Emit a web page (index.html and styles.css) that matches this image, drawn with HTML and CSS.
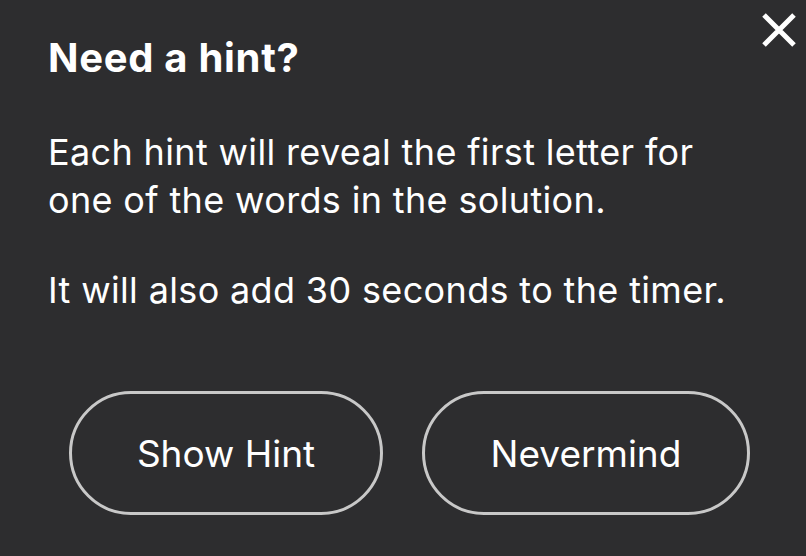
FILE: index.html
```html
<!DOCTYPE html>
<html>
<head>
<meta charset="utf-8">
<link rel="stylesheet" href="styles.css">
</head>
<body>
<div class="dialog">
  <button class="close" aria-label="Close">
    <svg width="36" height="36" viewBox="0 0 36 36"><path d="M3 3 L33 33 M33 3 L3 33" stroke="#fff" stroke-width="5" stroke-linecap="butt" fill="none"/></svg>
  </button>
  <h1 class="title">Need a hint?</h1>
  <p class="text">Each hint will reveal the first letter for one of the words in the solution.</p>
  <p class="text">It will also add 30 seconds to the timer.</p>
  <div class="actions">
    <button class="btn btn-show">Show Hint</button>
    <button class="btn btn-never">Nevermind</button>
  </div>
</div>
</body>
</html>
```
FILE: styles.css
```css
html, body {
  margin: 0;
  padding: 0;
  background: #2d2d2f;
}
.dialog {
  position: relative;
  width: 806px;
  height: 556px;
  box-sizing: border-box;
  padding: 36px 48px 0 48px;
  font-family: "Inter", "Liberation Sans", sans-serif;
  color: #fff;
}
.close {
  position: absolute;
  top: 12px;
  left: 761px;
  width: 36px;
  height: 36px;
  padding: 0;
  border: 0;
  background: none;
}
.close svg { display: block; }
.title {
  margin: 0;
  font-size: 40px;
  font-weight: 700;
  line-height: 44px;
  letter-spacing: 0.7px;
}
.text {
  margin: 48px 0 0 0;
  font-size: 36px;
  line-height: 48px;
  width: 700px;
  letter-spacing: 0.35px;
}
.text + .text {
  margin-top: 42px;
}
.actions {
  display: flex;
  gap: 39px;
  margin-top: 77px;
  padding-left: 21px;
}
.btn {
  height: 124px;
  box-sizing: border-box;
  border: 3px solid #c8c8c8;
  border-radius: 62px;
  background: transparent;
  color: #fff;
  font-family: inherit;
  font-size: 37px;
  padding: 0;
}
.btn-show { width: 314px; }
.btn-never { width: 328px; }
```
